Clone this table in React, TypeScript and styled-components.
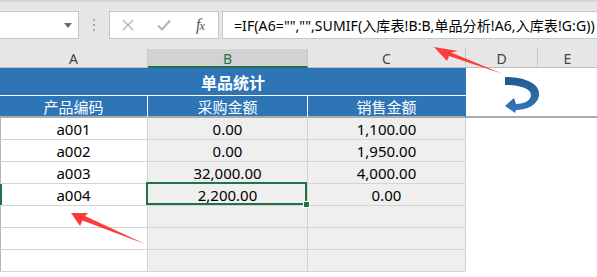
import React from "react";
import styled, { createGlobalStyle } from "styled-components";

const Global = createGlobalStyle`
  html, body { margin: 0; padding: 0; background: #fff; overflow: hidden; }
  #root { width: 597px; height: 277px; }
`;

const Page = styled.div`
  position: relative;
  width: 597px;
  height: 277px;
  overflow: hidden;
  background: #fff;
  font-family: "Noto Sans", "Noto Sans CJK SC", sans-serif;
`;

const TopArea = styled.div`
  box-sizing: border-box;
  height: 48px;
  background: #e6e6e6;
  border-top: 2px solid #d6d6d6;
  padding-top: 9px;
  display: flex;
  align-items: flex-start;
`;

const NameBox = styled.div`
  box-sizing: border-box;
  width: 80px;
  height: 28px;
  margin-left: -1px;
  background: #fff;
  border: 1px solid #c6c6c6;
  display: flex;
  align-items: center;
  justify-content: flex-end;
  padding-right: 6px;
`;

const Grip = styled.div`
  width: 30px;
  height: 28px;
  display: flex;
  flex-direction: column;
  align-items: center;
  justify-content: center;
  gap: 3px;
`;

const GripDot = styled.span`
  width: 2px;
  height: 2px;
  background: #a8a8a8;
`;

const FuncBox = styled.div`
  box-sizing: border-box;
  width: 110px;
  height: 28px;
  background: #fff;
  border: 1px solid #c6c6c6;
  display: grid;
  grid-template-columns: 36px 36px 36px;
  align-items: center;
  justify-items: center;
  margin-right: 3px;
`;

const Fx = styled.span`
  font-family: "Liberation Serif", serif;
  font-style: italic;
  color: #555;
  font-size: 16px;
  line-height: 1;
  letter-spacing: -1px;
  & > small {
    font-size: 12px;
  }
`;

const FormulaBox = styled.div`
  box-sizing: border-box;
  flex: 1;
  height: 28px;
  margin-right: -1px;
  background: #fff;
  border: 1px solid #c6c6c6;
  padding-left: 11px;
  display: flex;
  align-items: center;
  font-size: 14px;
  letter-spacing: 0.1px;
  color: #000;
  white-space: nowrap;
  overflow: hidden;
`;

const Sheet = styled.div`
  display: grid;
  grid-template-columns: 148px 160px 158px 72px 1fr;
  grid-template-rows: 20px 28px 22px repeat(7, 22px);
`;

const ColHeader = styled.div<{ $selected?: boolean; $last?: boolean }>`
  box-sizing: border-box;
  background: ${(p) => (p.$selected ? "#d2d2d2" : "#e6e6e6")};
  border-top: 1px solid #e6e6e6;
  border-right: ${(p) => (p.$last ? "none" : "1px solid #c6c6c6")};
  border-bottom: ${(p) => (p.$selected ? "2px solid #217346" : "1px solid #bdbdbd")};
  color: ${(p) => (p.$selected ? "#217346" : "#444")};
  font-size: 14px;
  display: flex;
  align-items: center;
  justify-content: center;
  padding-top: ${(p) => (p.$selected ? "1px" : "0")};
`;

const TitleCell = styled.div`
  grid-column: 1 / span 3;
  box-sizing: border-box;
  background: #2e75b6;
  border-bottom: 1px solid #fff;
  color: #fff;
  font-weight: bold;
  font-size: 16px;
  font-family: "Noto Sans CJK SC", sans-serif;
  display: flex;
  align-items: center;
  justify-content: center;
`;

const SideBlank = styled.div`
  grid-column: 4 / span 2;
  grid-row: 2 / span 2;
  box-sizing: border-box;
  background: #fff;
  border-bottom: 2px solid #ababab;
`;

const SubHeader = styled.div<{ $last?: boolean }>`
  box-sizing: border-box;
  background: #2e75b6;
  border-right: 1px solid ${(p) => (p.$last ? "#2e75b6" : "#fff")};
  border-bottom: 2px solid #ababab;
  color: #fff;
  font-size: 15px;
  font-family: "Noto Sans CJK SC", sans-serif;
  display: flex;
  align-items: center;
  justify-content: center;
`;

const Cell = styled.div<{ $grey?: boolean; $edge?: "plain" | "active" }>`
  box-sizing: border-box;
  position: relative;
  background: ${(p) => (p.$grey ? "#efefef" : "#fff")};
  border-right: 1px solid #d4d4d4;
  border-bottom: 1px solid #d4d4d4;
  box-shadow: ${(p) =>
    p.$edge === "active"
      ? "inset 2px 0 0 #217346"
      : p.$edge === "plain"
      ? "inset 1px 0 0 #b4b4b4"
      : "none"};
  color: #000;
  font-size: 15px;
  display: flex;
  align-items: center;
  justify-content: center;
`;

const ActiveCell = styled(Cell)`
  z-index: 2;
  &::after {
    content: "";
    position: absolute;
    left: -2px;
    top: -2px;
    right: 0;
    bottom: 0;
    border: 2px solid #217346;
  }
  &::before {
    content: "";
    position: absolute;
    right: -3px;
    bottom: -3px;
    width: 5px;
    height: 5px;
    background: #217346;
    border: 1px solid #fff;
    z-index: 3;
  }
`;

const Blank = styled.div`
  grid-column: span 2;
  background: #fff;
`;

const Annotations = styled.svg`
  position: absolute;
  left: 0;
  top: 0;
  width: 597px;
  height: 277px;
  pointer-events: none;
  z-index: 5;
`;

const rows: [string, string, string][] = [
  ["a001", "0.00", "1,100.00"],
  ["a002", "0.00", "1,950.00"],
  ["a003", "32,000.00", "4,000.00"],
  ["a004", "2,200.00", "0.00"],
];

export default function App() {
  return (
    <Page>
      <Global />
      <TopArea>
        <NameBox>
          <svg width="8" height="5" viewBox="0 0 8 5">
            <path d="M0 0 H8 L4 5 Z" fill="#6a6a6a" />
          </svg>
        </NameBox>
        <Grip>
          <GripDot />
          <GripDot />
          <GripDot />
        </Grip>
        <FuncBox>
          <svg width="12" height="12" viewBox="0 0 12 12">
            <path d="M1 1 L11 11 M11 1 L1 11" stroke="#b4b4b4" strokeWidth="1.4" fill="none" />
          </svg>
          <svg width="14" height="12" viewBox="0 0 14 12">
            <path d="M1 6.5 L5 10.5 L13 1.5" stroke="#b4b4b4" strokeWidth="2" fill="none" />
          </svg>
          <Fx>
            f<small>x</small>
          </Fx>
        </FuncBox>
        <FormulaBox>=IF(A6="","",SUMIF(入库表!B:B,单品分析!A6,入库表!G:G))</FormulaBox>
      </TopArea>
      <Sheet>
        <ColHeader>A</ColHeader>
        <ColHeader $selected>B</ColHeader>
        <ColHeader>C</ColHeader>
        <ColHeader>D</ColHeader>
        <ColHeader $last>E</ColHeader>

        <TitleCell>单品统计</TitleCell>
        <SideBlank />

        <SubHeader>产品编码</SubHeader>
        <SubHeader>采购金额</SubHeader>
        <SubHeader $last>销售金额</SubHeader>

        {rows.map(([code, buy, sell], i) => {
          const active = i === 3;
          return (
            <React.Fragment key={code}>
              <Cell $edge={active ? "active" : "plain"}>{code}</Cell>
              {active ? <ActiveCell $grey>{buy}</ActiveCell> : <Cell $grey>{buy}</Cell>}
              <Cell $grey>{sell}</Cell>
              <Blank />
            </React.Fragment>
          );
        })}
        {[0, 1, 2].map((i) => (
          <React.Fragment key={"e" + i}>
            <Cell $edge="plain" />
            <Cell $grey />
            <Cell $grey />
            <Blank />
          </React.Fragment>
        ))}
      </Sheet>

      <Annotations viewBox="0 0 597 277">
        <defs>
          <linearGradient id="curveGrad" x1="0" y1="0" x2="0" y2="1">
            <stop offset="0" stopColor="#1f5a8f" />
            <stop offset="0.5" stopColor="#2b68a6" />
            <stop offset="1" stopColor="#3479bf" />
          </linearGradient>
        </defs>
        <polygon
          points="434,47 458,51 451,52.5 503,74 449,56 447,61"
          fill="#fd3b3b"
        />
        <polygon
          points="71,213 88,213 85,216 145,244 82.5,220.5 80,226"
          fill="#fd3b3b"
        />
        <path
          d="M505,77 C527,77 541,85 539,96 C537,105 527,110 516,110 L515,113 L505,106 L514,98 L516,104 C525,104 531,100 531,95 C531,89 521,85 505,85 Z"
          fill="url(#curveGrad)"
        />
      </Annotations>
    </Page>
  );
}
